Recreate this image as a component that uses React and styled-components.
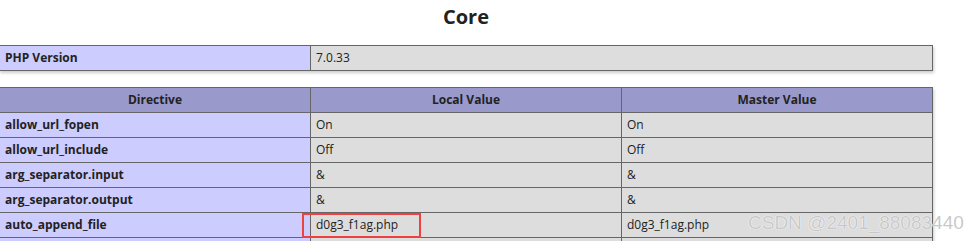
import React from 'react';
import styled, { createGlobalStyle } from 'styled-components';

const GlobalStyle = createGlobalStyle`
  html, body {
    margin: 0;
    padding: 0;
    background: #fff;
    overflow: hidden;
  }
  body {
    font-family: "Open Sans", "Noto Sans", sans-serif;
    color: #222;
  }
`;

const Page = styled.div`
  position: relative;
  width: 965px;
  height: 241px;
  overflow: hidden;
`;

const Center = styled.div`
  width: 934px;
  margin-left: -1px;
`;

const Heading = styled.h2`
  margin: 0;
  padding-top: 3px;
  height: 42px;
  font-size: 20px;
  font-weight: 700;
  line-height: 28px;
  text-align: center;
  color: #222;
`;

const Table = styled.table`
  width: 934px;
  border-collapse: collapse;
  box-shadow: 1px 2px 3px #ccc;
  margin-bottom: 16px;
  table-layout: fixed;
`;

const Row = styled.tr`
  height: 25px;
`;

const Cell = styled.td`
  border: 1px solid #666;
  font-size: 12px;
  line-height: 16px;
  padding: 4px 5px;
  vertical-align: middle;
  white-space: nowrap;
  background: ${p => (p.$kind === 'e' ? '#ccf' : '#ddd')};
  font-weight: ${p => (p.$kind === 'e' ? 700 : 400)};
  width: ${p => (p.$kind === 'e' ? '300px' : 'auto')};
  color: #222;
`;

const Head = styled.th`
  border: 1px solid #666;
  font-size: 12px;
  line-height: 16px;
  padding: 4px 5px;
  background: #99c;
  font-weight: 700;
  text-align: center;
  vertical-align: middle;
  width: ${p => (p.$first ? '300px' : 'auto')};
  color: #222;
`;

const Mark = styled.span`
  position: relative;
  display: inline-block;
`;

const Highlight = styled.span`
  position: absolute;
  left: -14px;
  top: -4px;
  width: 115px;
  height: 21px;
  border: 2px solid #ee4242;
`;

const Watermark = styled.div`
  position: absolute;
  left: 748px;
  top: 211px;
  font-family: "Liberation Sans", Arial, sans-serif;
  font-size: 19px;
  line-height: 24px;
  color: rgba(190, 190, 190, 0.85);
  text-shadow: 0 0 1px #fff, 0 0 1px #fff;
  white-space: nowrap;
  pointer-events: none;
`;

const directives = [
  { name: 'allow_url_fopen', local: 'On', master: 'On' },
  { name: 'allow_url_include', local: 'Off', master: 'Off' },
  { name: 'arg_separator.input', local: '&', master: '&' },
  { name: 'arg_separator.output', local: '&', master: '&' },
  { name: 'auto_append_file', local: 'd0g3_f1ag.php', master: 'd0g3_f1ag.php', marked: true },
  { name: 'auto_globals_jit', local: 'On', master: 'On' },
];

export default function App() {
  return (
    <>
      <GlobalStyle />
      <Page>
        <Center>
          <Heading>Core</Heading>
          <Table>
            <tbody>
              <Row>
                <Cell $kind="e">PHP Version</Cell>
                <Cell $kind="v">7.0.33</Cell>
              </Row>
            </tbody>
          </Table>
          <Table>
            <thead>
              <Row>
                <Head $first>Directive</Head>
                <Head>Local Value</Head>
                <Head>Master Value</Head>
              </Row>
            </thead>
            <tbody>
              {directives.map(d => (
                <Row key={d.name}>
                  <Cell $kind="e">{d.name}</Cell>
                  <Cell $kind="v">
                    {d.marked ? (
                      <Mark>
                        {d.local}
                        <Highlight />
                      </Mark>
                    ) : (
                      d.local
                    )}
                  </Cell>
                  <Cell $kind="v">{d.master}</Cell>
                </Row>
              ))}
            </tbody>
          </Table>
        </Center>
        <Watermark>CSDN @2401_88083440</Watermark>
      </Page>
    </>
  );
}
